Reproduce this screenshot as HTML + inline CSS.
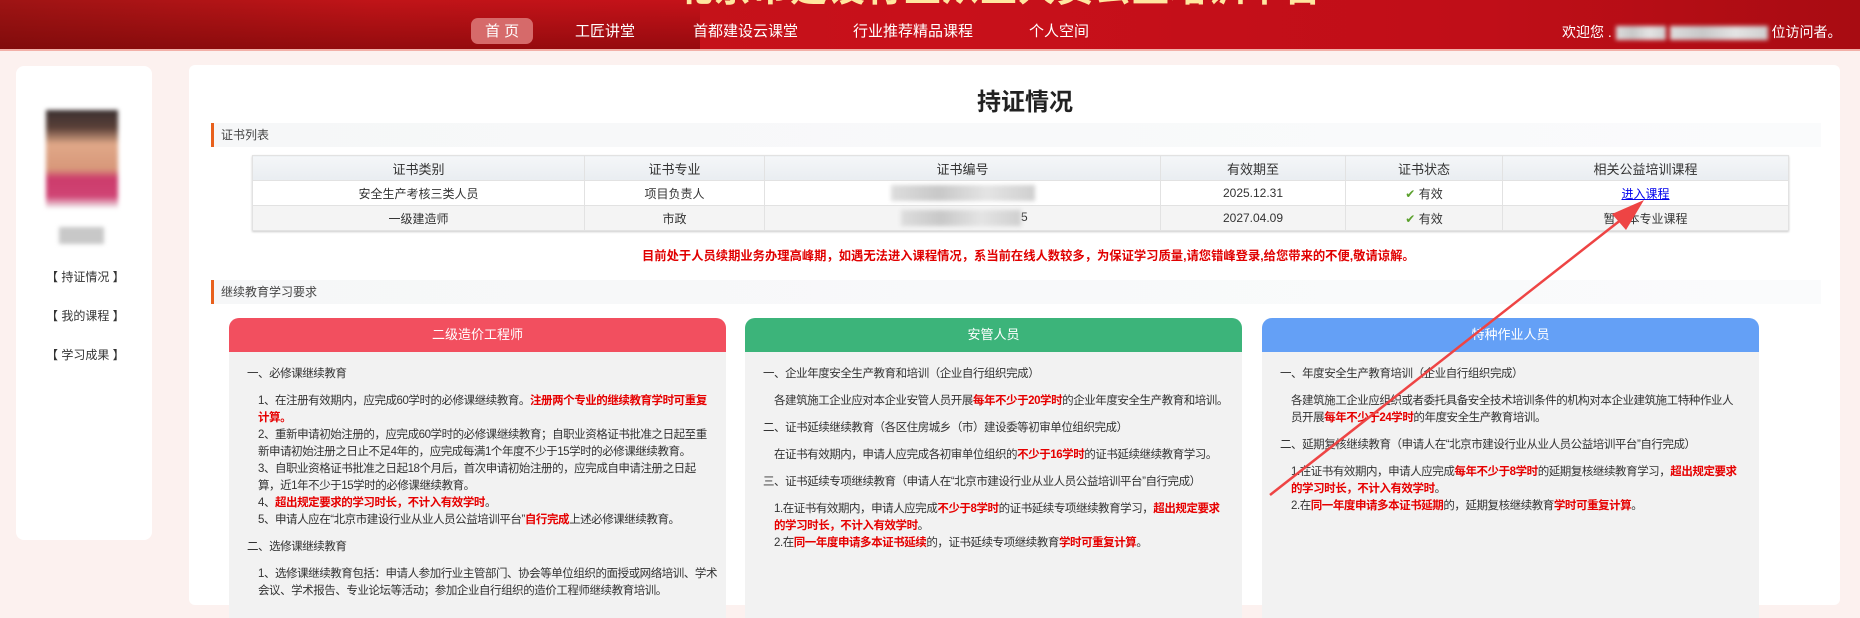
<!DOCTYPE html>
<html><head><meta charset="utf-8"><style>
*{margin:0;padding:0;box-sizing:border-box}
body{width:1860px;height:600px;overflow:hidden;background:#fcf1ef;font-family:"Liberation Sans","Noto Sans CJK SC",sans-serif;font-size:12px;color:#333;position:relative}
.hdr{position:absolute;left:0;top:0;width:1860px;height:51px;background:linear-gradient(90deg,#9e1414 0%,#c01418 20%,#c8101a 50%,#c00e18 80%,#a80c12 100%);overflow:hidden;border-bottom:2px solid #f2b0a8}
.city{position:absolute;left:0;top:0;width:700px;height:51px;background:linear-gradient(180deg,rgba(0,0,0,0) 0%,rgba(90,0,0,.45) 100%)}
.ttl{position:absolute;left:676px;top:-42px;width:500px;font-size:37px;font-weight:bold;color:#ffe7a0;letter-spacing:1px;white-space:nowrap}
.nav{position:absolute;top:21px;color:#fff;font-size:15px;line-height:22px}
.pill{position:absolute;left:471px;top:18px;width:62px;height:26px;border-radius:7px;background:#d66a6a}
.side{position:absolute;left:16px;top:66px;width:136px;height:474px;background:#fff;border-radius:8px}
.main{position:absolute;left:189px;top:65px;width:1651px;height:540px;background:#fff;border-radius:6px}
.a{position:absolute}
.sec{position:absolute;left:211px;width:1610px;height:24px;background:linear-gradient(90deg,#f6f7f8,#fafbfc);border-left:3px solid #e8601c;font-size:12px;line-height:24px;padding-left:7px;color:#444}
table{position:absolute;left:252px;top:155px;width:1537px;border-collapse:collapse;font-size:12px;box-shadow:0 1px 2px #ccc}
td,th{border:1px solid #e2e2e2;text-align:center;height:25px;font-weight:normal}
th{background:linear-gradient(#f4f6f8,#e9edf1);font-size:13px}
tr.r2 td{background:#f4f4f4}
.blur{display:inline-block;height:16px;background:linear-gradient(90deg,#ddd,#c8c8c8,#e4e4e4,#cfcfcf);filter:blur(2px);vertical-align:middle}
.card{position:absolute;top:318px;width:497px;height:300px;background:#f2f2f2;border-radius:10px 10px 0 0;overflow:hidden}
.card .h{height:34px;line-height:34px;text-align:center;color:#fff;font-size:13px}
.card .b{padding:14px 0 0 18px;font-size:11.5px;line-height:17px;color:#333;letter-spacing:-0.45px}
.card p{margin:0}
.r{color:#e60000;font-weight:bold}
.gp{height:10px}
</style></head><body>
<div class="hdr"><div class="city"></div><div class="ttl">北京市建设行业从业人员公益培训平台</div>
<div class="pill"></div>
<div class="nav" style="left:485px">首 页</div>
<div class="nav" style="left:575px">工匠讲堂</div>
<div class="nav" style="left:693px">首都建设云课堂</div>
<div class="nav" style="left:853px">行业推荐精品课程</div>
<div class="nav" style="left:1029px">个人空间</div>
<div class="nav" style="left:1562px;font-size:14px">欢迎您 . <span class="blur" style="width:50px;height:14px"></span> <span class="blur" style="width:98px;height:14px"></span> 位访问者。</div>
</div>
<div class="side">
<div class="a" style="left:30px;top:44px;width:72px;height:98px;background:linear-gradient(180deg,#3a3030 0%,#5a4038 18%,#e0a888 35%,#d8987a 60%,#cc3c6c 70%,#d04474 88%,#f2f2f2 100%);filter:blur(2px)"></div>
<div class="a" style="left:43px;top:161px;width:45px;height:17px;background:#c8c8c8;filter:blur(2px)"></div>
<div class="a" style="left:30px;top:202px;font-size:12px">【 持证情况 】</div>
<div class="a" style="left:30px;top:241px;font-size:12px">【 我的课程 】</div>
<div class="a" style="left:30px;top:280px;font-size:12px">【 学习成果 】</div>
</div>
<div class="main"></div>
<div class="a" style="left:977px;top:82px;font-size:24px;font-weight:bold;color:#222">持证情况</div>
<div class="sec" style="top:123px">证书列表</div>
<table>
<tr><th style="width:332px">证书类别</th><th style="width:180px">证书专业</th><th style="width:396px">证书编号</th><th style="width:185px">有效期至</th><th style="width:157px">证书状态</th><th>相关公益培训课程</th></tr>
<tr><td>安全生产考核三类人员</td><td>项目负责人</td><td style="text-align:left;padding-left:126px"><span class="blur" style="width:144px"></span></td><td>2025.12.31</td><td><span style="color:#5aa02c">✔</span> 有效</td><td><a style="color:#0000ee;text-decoration:underline">进入课程</a></td></tr>
<tr class="r2"><td>一级建造师</td><td>市政</td><td style="text-align:left;padding-left:136px"><span class="blur" style="width:120px"></span>5</td><td>2027.04.09</td><td><span style="color:#5aa02c">✔</span> 有效</td><td>暂无本专业课程</td></tr>
</table>
<div class="a" style="left:642px;top:246px;color:#e00000;font-weight:bold;font-size:12.3px;white-space:nowrap">目前处于人员续期业务办理高峰期，如遇无法进入课程情况，系当前在线人数较多，为保证学习质量,请您错峰登录,给您带来的不便,敬请谅解。</div>
<div class="sec" style="top:280px">继续教育学习要求</div>

<div class="card" style="left:229px"><div class="h" style="background:#f24f5f">二级造价工程师</div><div class="b">
<p>一、必修课继续教育</p><div class="gp"></div>
<div style="padding-left:11px;width:470px">
<p>1、在注册有效期内，应完成60学时的必修课继续教育。<span class="r">注册两个专业的继续教育学时可重复计算。</span></p>
<p>2、重新申请初始注册的，应完成60学时的必修课继续教育；自职业资格证书批准之日起至重新申请初始注册之日止不足4年的，应完成每满1个年度不少于15学时的必修课继续教育。</p>
<p>3、自职业资格证书批准之日起18个月后，首次申请初始注册的，应完成自申请注册之日起算，近1年不少于15学时的必修课继续教育。</p>
<p>4、<span class="r">超出规定要求的学习时长，不计入有效学时</span>。</p>
<p>5、申请人应在“北京市建设行业从业人员公益培训平台”<span class="r">自行完成</span>上述必修课继续教育。</p></div>
<div class="gp"></div><p>二、选修课继续教育</p><div class="gp"></div>
<div style="padding-left:11px;width:470px"><p>1、选修课继续教育包括：申请人参加行业主管部门、协会等单位组织的面授或网络培训、学术会议、学术报告、专业论坛等活动；参加企业自行组织的造价工程师继续教育培训。</p></div>
</div></div>

<div class="card" style="left:745px"><div class="h" style="background:#3cb47a">安管人员</div><div class="b">
<p>一、企业年度安全生产教育和培训（企业自行组织完成）</p><div class="gp"></div>
<p style="padding-left:11px">各建筑施工企业应对本企业安管人员开展<span class="r">每年不少于20学时</span>的企业年度安全生产教育和培训。</p><div class="gp"></div>
<p>二、证书延续继续教育（各区住房城乡（市）建设委等初审单位组织完成）</p><div class="gp"></div>
<p style="padding-left:11px">在证书有效期内，申请人应完成各初审单位组织的<span class="r">不少于16学时</span>的证书延续继续教育学习。</p><div class="gp"></div>
<p>三、证书延续专项继续教育（申请人在“北京市建设行业从业人员公益培训平台”自行完成）</p><div class="gp"></div>
<div style="padding-left:11px;width:460px"><p>1.在证书有效期内，申请人应完成<span class="r">不少于8学时</span>的证书延续专项继续教育学习，<span class="r">超出规定要求的学习时长，不计入有效学时</span>。</p>
<p>2.在<span class="r">同一年度申请多本证书延续</span>的，证书延续专项继续教育<span class="r">学时可重复计算</span>。</p></div>
</div></div>

<div class="card" style="left:1262px"><div class="h" style="background:#64a0f6">特种作业人员</div><div class="b">
<p>一、年度安全生产教育培训（企业自行组织完成）</p><div class="gp"></div>
<p style="padding-left:11px;width:460px">各建筑施工企业应组织或者委托具备安全技术培训条件的机构对本企业建筑施工特种作业人员开展<span class="r">每年不少于24学时</span>的年度安全生产教育培训。</p><div class="gp"></div>
<p>二、延期复核继续教育（申请人在“北京市建设行业从业人员公益培训平台”自行完成）</p><div class="gp"></div>
<div style="padding-left:11px;width:460px"><p>1.在证书有效期内，申请人应完成<span class="r">每年不少于8学时</span>的延期复核继续教育学习，<span class="r">超出规定要求的学习时长，不计入有效学时</span>。</p>
<p>2.在<span class="r">同一年度申请多本证书延期</span>的，延期复核继续教育<span class="r">学时可重复计算</span>。</p></div>
</div></div>

<svg class="a" style="left:0;top:0" width="1860" height="600"><line x1="1270" y1="495" x2="1636" y2="208" stroke="#ee4444" stroke-width="2.5"/><polygon points="1644,200 1612,214 1626,230" fill="#ee4444"/></svg>
</body></html>
